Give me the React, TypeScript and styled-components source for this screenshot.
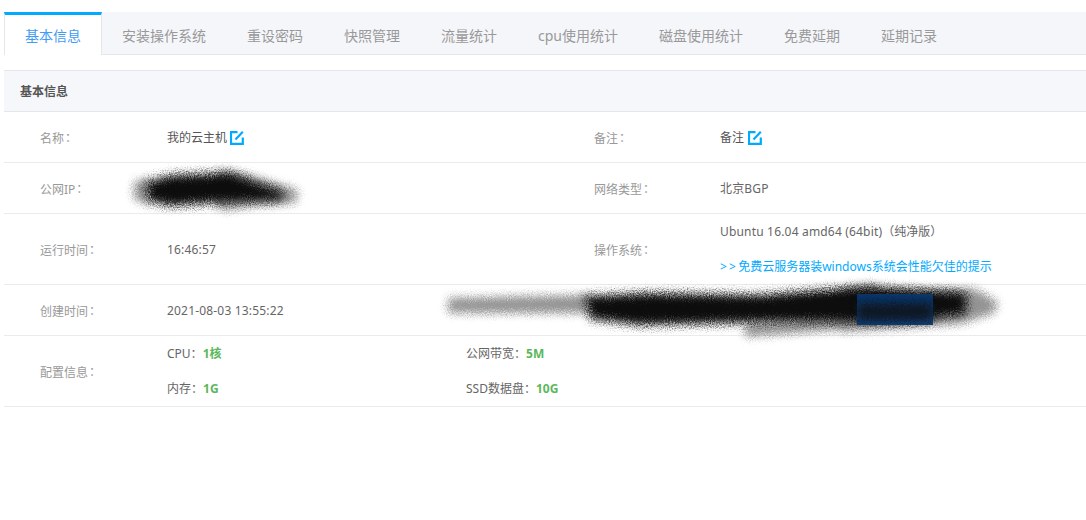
import React from "react";
import styled, { createGlobalStyle } from "styled-components";

const Global = createGlobalStyle`
  html, body { margin: 0; padding: 0; background: #fff; }
  body { font-family: "Noto Sans", "Noto Sans CJK SC", sans-serif; font-size: 12px; color: #666; }
`;

const Page = styled.div`
  position: relative;
  width: 1086px;
  height: 520px;
  padding: 12px 0 0 4px;
  box-sizing: border-box;
  overflow: hidden;
`;

const Tabs = styled.ul`
  display: flex;
  height: 43px;
  margin: 0 0 15px;
  padding: 0;
  list-style: none;
  background: #f5f6fa;
  border-bottom: 1px solid #e3e6ea;
  box-sizing: border-box;
`;

const Tab = styled.li<{ $active?: boolean }>`
  height: 43px;
  box-sizing: border-box;
  margin-right: -1px;
  padding: 0 20px;
  line-height: 41px;
  font-size: 14px;
  border: 1px solid transparent;
  border-bottom: none;
  border-top: 3px solid ${(p) => (p.$active ? "#00aaff" : "transparent")};
  color: ${(p) => (p.$active ? "#3f9cf5" : "#999")};
  background: ${(p) => (p.$active ? "#fff" : "transparent")};
  border-left-color: ${(p) => (p.$active ? "#e3e6ea" : "transparent")};
  border-right-color: ${(p) => (p.$active ? "#e3e6ea" : "transparent")};
`;

const PanelHead = styled.div`
  height: 42px;
  box-sizing: border-box;
  padding-left: 16px;
  line-height: 41px;
  font-weight: 700;
  color: #555;
  background: #f6f7fa;
  border-top: 1px solid #e3e6ea;
  border-bottom: 1px solid #e3e6ea;
`;

const Row = styled.div<{ $tall?: boolean }>`
  display: grid;
  grid-template-columns: 163px 427px 126px 1fr;
  align-items: center;
  height: ${(p) => (p.$tall ? 71 : 51)}px;
  box-sizing: border-box;
  border-bottom: 1px solid #ebebeb;
`;

const ConfigRow = styled(Row)`
  grid-template-columns: 163px 299px 1fr;
`;

const Label = styled.div<{ $first?: boolean }>`
  padding-left: ${(p) => (p.$first ? 36 : 0)}px;
  padding-top: 2px;
  color: #999;
  white-space: pre;
`;

const Colon = styled.span`
  margin-left: -2px;
  font-family: "Noto Sans CJK TC", sans-serif;
`;

const Value = styled.div<{ $strong?: boolean; $gap?: number }>`
  display: flex;
  align-items: center;
  gap: ${(p) => p.$gap ?? 3}px;
  letter-spacing: ${(p) => (p.$strong ? 0 : 0.18)}px;
  color: ${(p) => (p.$strong ? "#555" : "#666")};
`;

const Stack = styled.div`
  line-height: 35px;
  color: #666;
  white-space: pre;
`;

const Latin = styled.span`
  letter-spacing: 0.18px;
`;

const Link = styled.div`
  color: #00aaff;
`;

const Arrows = styled.span`
  letter-spacing: 2.2px;
`;

const Num = styled.b`
  color: #5cb85c;
  font-weight: 700;
`;

const IconSvg = styled.svg`
  margin-top: 2px;
`;

const Scribbles = styled.svg`
  position: absolute;
  left: 0;
  top: 0;
  pointer-events: none;
`;

const EditIcon = () => (
  <IconSvg width="14" height="14" viewBox="0 0 14 14" fill="none" stroke="#00aaff">
    <path d="M7.500 1.200H1V12.800H12.800V6.500" strokeWidth="2.200" />
    <path d="M5.500 8.500L12.800 0.800" strokeWidth="2.200" />
  </IconSvg>
);

const tabs = ["基本信息", "安装操作系统", "重设密码", "快照管理", "流量统计", "cpu使用统计", "磁盘使用统计", "免费延期", "延期记录"];

export default function App() {
  return (
    <>
      <Global />
      <Page>
        <Tabs>
          {tabs.map((t, i) => (
            <Tab key={t} $active={i === 0}>{t}</Tab>
          ))}
        </Tabs>
        <PanelHead>基本信息</PanelHead>
        <Row>
          <Label $first>名称<Colon>：</Colon></Label>
          <Value $strong>我的云主机<EditIcon /></Value>
          <Label>备注<Colon>：</Colon></Label>
          <Value $strong $gap={4}>备注<EditIcon /></Value>
        </Row>
        <Row>
          <Label $first>公网IP<Colon>：</Colon></Label>
          <Value />
          <Label>网络类型<Colon>：</Colon></Label>
          <Value>北京BGP</Value>
        </Row>
        <Row $tall>
          <Label $first>运行时间<Colon>：</Colon></Label>
          <Value>16:46:57</Value>
          <Label>操作系统<Colon>：</Colon></Label>
          <Stack>
            <div><Latin>Ubuntu 16.04 amd64 (64bit)</Latin>（纯净版）</div>
            <Link><Arrows>&gt;&gt;</Arrows>免费云服务器装windows系统会性能欠佳的提示</Link>
          </Stack>
        </Row>
        <Row>
          <Label $first>创建时间<Colon>：</Colon></Label>
          <Value>2021-08-03 13:55:22</Value>
        </Row>
        <ConfigRow $tall>
          <Label $first>配置信息<Colon>：</Colon></Label>
          <Stack>
            <div>CPU：<Num>1核</Num></div>
            <div>内存：<Num>1G</Num></div>
          </Stack>
          <Stack>
            <div>公网带宽：<Num>5M</Num></div>
            <div>SSD数据盘：<Num>10G</Num></div>
          </Stack>
        </ConfigRow>
        <Scribbles width="1086" height="520" viewBox="0 0 1086 520">
          <defs>
            <filter id="ink" x="-20%" y="-60%" width="140%" height="220%">
              <feGaussianBlur in="SourceGraphic" stdDeviation="4.500" result="b" />
              <feTurbulence type="fractalNoise" baseFrequency="0.95" numOctaves="2" seed="3" result="n" />
              <feDisplacementMap in="b" in2="n" scale="13" xChannelSelector="R" yChannelSelector="G" />
            </filter>
            <filter id="inkSoft" x="-20%" y="-80%" width="140%" height="260%">
              <feGaussianBlur in="SourceGraphic" stdDeviation="4" result="b" />
              <feTurbulence type="fractalNoise" baseFrequency="0.95" numOctaves="2" seed="8" result="n" />
              <feDisplacementMap in="b" in2="n" scale="11" xChannelSelector="R" yChannelSelector="G" />
            </filter>
          </defs>
          <g filter="url(#inkSoft)" fill="#000" opacity="0.42">
            <path d="M448 298 L590 295 L590 313 L448 313Z" />
            <path d="M745 324 L850 316 L860 328 L745 337Z" />
            <path d="M134 182 L150 178 L150 205 L134 199Z" />
            <path d="M218 170 L240 173 L262 179 L298 190 L296 203 L250 206 L228 210 L215 207Z" />
            <path d="M840 290 L872 284 L880 290 L975 289 L998 302 L994 313 L960 324 L840 332Z" />
          </g>
          <g filter="url(#ink)" fill="#0c0c0c">
            <path d="M146 182 L172 175 L230 173 L260 184 L284 192 L282 200 L224 202 L170 206 L148 201Z" />
            <path d="M584 296 L650 293 L760 295 L846 288 L868 287 L966 293 L966 314 L900 322 L780 322 L640 325 L590 319Z" />
          </g>
          <rect x="857" y="294" width="76" height="31" fill="#0a3a72" opacity="0.9" />
          <path d="M857 303 H933 V320 H857Z" fill="#0b1622" filter="url(#inkSoft)" />
        </Scribbles>
      </Page>
    </>
  );
}
